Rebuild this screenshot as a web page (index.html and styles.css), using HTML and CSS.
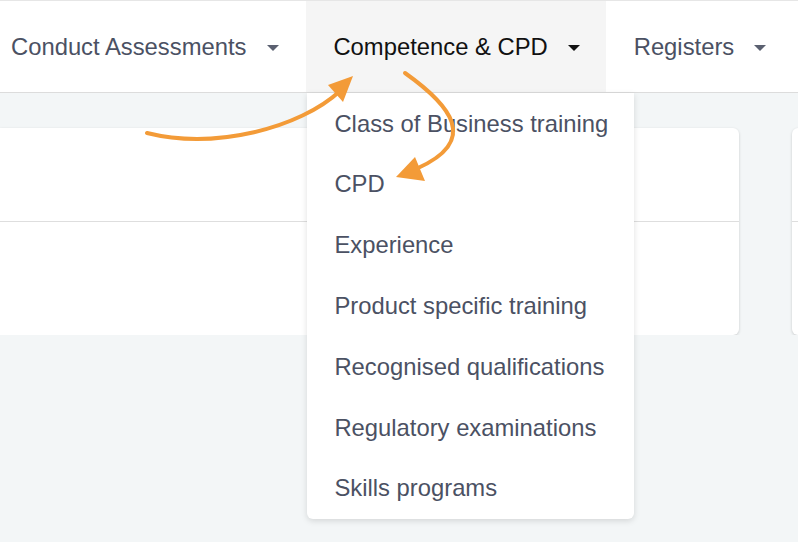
FILE: index.html
```html
<!DOCTYPE html>
<html lang="en">
<head>
    <meta charset="UTF-8">
    <meta name="viewport" content="width=device-width, initial-scale=1.0">
    <title>Competence &amp; CPD</title>
    <link rel="stylesheet" href="styles.css">
</head>
<body>
    <nav class="topnav">
        <div class="nav-item">
            <span>Conduct Assessments</span>
            <span class="caret"></span>
        </div>
        <div class="nav-item active">
            <span>Competence &amp; CPD</span>
            <span class="caret"></span>
            <ul class="dropdown">
                <li>Class of Business training</li>
                <li>CPD</li>
                <li>Experience</li>
                <li>Product specific training</li>
                <li>Recognised qualifications</li>
                <li>Regulatory examinations</li>
                <li>Skills programs</li>
            </ul>
        </div>
        <div class="nav-item">
            <span>Registers</span>
            <span class="caret"></span>
        </div>
    </nav>

    <main class="content">
        <div class="card card-left">
            <div class="card-head"></div>
            <div class="card-body"></div>
        </div>
        <div class="card card-right">
            <div class="card-head"></div>
            <div class="card-body"></div>
        </div>
    </main>

    <svg class="arrows" width="798" height="542" viewBox="0 0 798 542">
        <path d="M147,133 C215,150 300,128 340,91" fill="none" stroke="#f39b38" stroke-width="4" stroke-linecap="round"/>
        <polygon points="328,85 353,76 343,102" fill="#f39b38"/>
        <path d="M405,73 C450,105 480,140 418,168" fill="none" stroke="#f39b38" stroke-width="4" stroke-linecap="round"/>
        <polygon points="396,177 415,157 425,181" fill="#f39b38"/>
    </svg>
</body>
</html>
```

FILE: styles.css
```css
body {
    margin: 0;
    font-family: "Liberation Sans", Arial, sans-serif;
    background-color: #f3f6f7;
    overflow: hidden;
    height: 542px;
    position: relative;
}
.topnav {
    display: flex;
    height: 91px;
    background: white;
    border-top: 1px solid #e6e6e6;
    border-bottom: 1px solid #dcdcdc;
    position: relative;
    z-index: 2;
}
.nav-item {
    position: relative;
    display: flex;
    align-items: center;
    gap: 20px;
    padding: 0 27px 0 28px;
    font-size: 23.8px;
    color: #4b5163;
    white-space: nowrap;
}
.nav-item:first-child {
    padding-left: 11px;
    gap: 21px;
    padding-right: 27px;
}
.nav-item.active {
    background: #f5f5f5;
    color: #111;
    padding-left: 27px;
    padding-right: 26px;
}
.caret {
    width: 0;
    height: 0;
    border-left: 6px solid transparent;
    border-right: 6px solid transparent;
    border-top: 6px solid #5b6070;
    margin-top: 2px;
}
.active .caret {
    border-top-color: #111;
}
.dropdown {
    position: absolute;
    top: 92px;
    left: 1px;
    width: 327px;
    margin: 0;
    padding: 0;
    list-style: none;
    background: white;
    border-radius: 0 0 6px 6px;
    box-shadow: 0 2px 6px rgba(0, 0, 0, 0.13);
}
.dropdown li {
    padding: 13.5px 27px 12.5px;
    line-height: 34.83px;
    color: #4b5163;
    white-space: nowrap;
}
.content {
    display: flex;
    gap: 53px;
    padding-top: 35px;
    overflow: hidden;
}
.card {
    background: white;
    height: 207px;
    border-radius: 6px;
    box-shadow: 0 1px 3px rgba(0, 0, 0, 0.18);
    flex-shrink: 0;
}
.card-left {
    width: 739px;
    border-radius: 0 6px 6px 0;
}
.card-right {
    width: 30px;
    border-radius: 6px 0 0 6px;
}
.card-head {
    height: 93px;
    border-bottom: 1px solid #dedede;
}
.arrows {
    position: absolute;
    top: 0;
    left: 0;
    z-index: 3;
    pointer-events: none;
}
```
